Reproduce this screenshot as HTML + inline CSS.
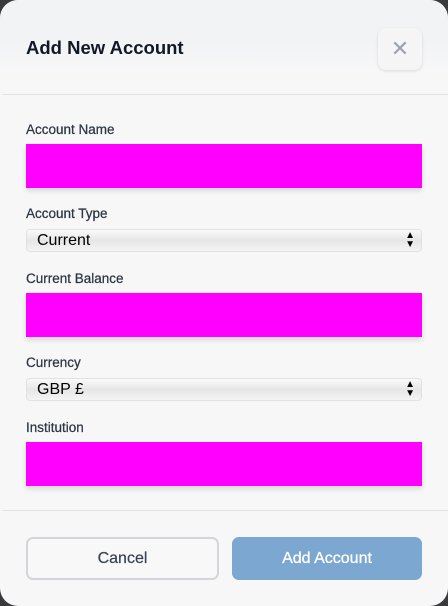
<!DOCTYPE html>
<html><head><style>
*{box-sizing:border-box;margin:0;padding:0}
body{width:448px;height:606px;background:#3a3a3c;font-family:"Liberation Sans",sans-serif;position:relative;overflow:hidden}
.m{position:absolute;left:0;top:0;width:448px;height:606px;background:#f7f7f8;border-radius:18px}
.hd{position:absolute;left:0;top:0;width:448px;height:70px;background:linear-gradient(#f2f3f5 0,#f2f3f5 40px,#f7f7f8 70px);border-radius:18px 18px 0 0}
h1{position:absolute;left:26px;top:37px;font-size:18.5px;font-weight:bold;color:#111827}
.x{position:absolute;left:378px;top:28px;width:44px;height:42px;background:#f5f5f6;border-radius:8px;box-shadow:0 1px 3px rgba(0,0,0,.12);color:#9ca3af;font-size:22px;text-align:center;line-height:42px}
.hr{position:absolute;left:2px;width:446px;height:1px;background:#e4e4e8}
.l{position:absolute;left:26px;font-size:13.5px;color:#2d3644;-webkit-text-stroke:0.25px #2d3644}
.i{position:absolute;left:26px;width:396px;height:44px;background:#ff00ff;box-shadow:0 3px 5px rgba(0,0,0,.12)}
.s{position:absolute;left:26px;width:396px;height:23px;border-radius:4px;background:linear-gradient(#fafafa,#e6e6e6 50%,#f4f4f4);border:1px solid #e2e2e2;font-size:16px;color:#000;padding-left:10px;line-height:21px}
.s span{position:absolute;right:6px;top:1px;font-size:10px;line-height:9px}
.b{position:absolute;top:537px;height:43px;border-radius:7px;font-size:16px;text-align:center;line-height:43px}
</style></head><body>
<div class="m">
<div class="hd"></div>
<h1>Add New Account</h1>
<div class="x">✕</div>
<div class="hr" style="top:94px"></div>
<div class="l" style="top:122px">Account Name</div>
<div class="i" style="top:144px"></div>
<div class="l" style="top:206px">Account Type</div>
<div class="s" style="top:229px">Current<span>▲<br>▼</span></div>
<div class="l" style="top:271px">Current Balance</div>
<div class="i" style="top:293px"></div>
<div class="l" style="top:355px">Currency</div>
<div class="s" style="top:378px">GBP £<span>▲<br>▼</span></div>
<div class="l" style="top:420px">Institution</div>
<div class="i" style="top:442px"></div>
<div class="hr" style="top:510px"></div>
<div class="b" style="left:26px;width:193px;border:2px solid #d4d5da;background:#f8f8f9;color:#374151;line-height:39px;-webkit-text-stroke:0.2px #374151">Cancel</div>
<div class="b" style="left:232px;width:190px;background:#7ba7d0;color:#fff;-webkit-text-stroke:0.3px #fff">Add Account</div>
</div>
</body></html>
